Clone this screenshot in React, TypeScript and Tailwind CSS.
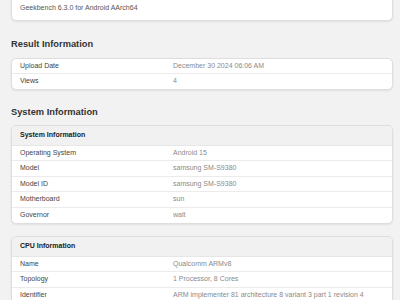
import React from "react";

const font = { fontFamily: '"Liberation Sans", Arial, sans-serif' };

function Row({ label, value, last, h }: { label: string; value: string; last?: boolean; h: string }) {
  return (
    <div className={`flex items-center ${h} text-[7px] ${last ? "" : "border-b border-[#ebebeb]"}`}>
      <div className="w-[161px] pl-[8px] text-[#444] shrink-0">{label}</div>
      <div className="text-[#8a8a8a] whitespace-nowrap">{value}</div>
    </div>
  );
}

function Card({ title, rows, h }: { title?: string; rows: [string, string][]; h: string }) {
  return (
    <div className="mr-[7px] bg-white border border-[#dedede] rounded-[5px] shadow-[0_1px_2px_rgba(0,0,0,0.08)] overflow-hidden">
      {title && (
        <div className="h-[20px] flex items-center pl-[8px] bg-[#f1f1f1] border-b border-[#e6e6e6] text-[7px] font-bold text-[#222]">
          {title}
        </div>
      )}
      {rows.map(([l, v], i) => (
        <Row key={l} label={l} value={v} h={h} last={i === rows.length - 1} />
      ))}
    </div>
  );
}

export default function App() {
  return (
    <div className="w-[400px] h-[300px] overflow-hidden bg-[#f2f2f2] pl-[11px]" style={font}>
      <div className="mt-[-6px] mr-[7px] bg-white border border-[#dedede] rounded-[5px] shadow-[0_1px_2px_rgba(0,0,0,0.08)] pt-[5px] pb-[4px]">
        <div className="h-[16px] flex items-center pl-[8px] text-[7px] text-[#555]">
          Geekbench 6.3.0 for Android AArch64
        </div>
      </div>
      <div className="mt-[18px] h-[12px] flex items-center text-[9.3px] font-bold text-[#333]">
        Result Information
      </div>
      <div className="mt-[7px]">
        <Card
          h="h-[15px]"
          rows={[
            ["Upload Date", "December 30 2024 06:06 AM"],
            ["Views", "4"],
          ]}
        />
      </div>
      <div className="mt-[17px] h-[12px] flex items-center text-[9.3px] font-bold text-[#333]">
        System Information
      </div>
      <div className="mt-[6px]">
        <Card
          title="System Information"
          h="h-[15.4px]"
          rows={[
            ["Operating System", "Android 15"],
            ["Model", "samsung SM-S9380"],
            ["Model ID", "samsung SM-S9380"],
            ["Motherboard", "sun"],
            ["Governor", "walt"],
          ]}
        />
      </div>
      <div className="mt-[12px]">
        <Card
          title="CPU Information"
          h="h-[15.4px]"
          rows={[
            ["Name", "Qualcomm ARMv8"],
            ["Topology", "1 Processor, 8 Cores"],
            ["Identifier", "ARM implementer 81 architecture 8 variant 3 part 1 revision 4"],
          ]}
        />
      </div>
    </div>
  );
}
